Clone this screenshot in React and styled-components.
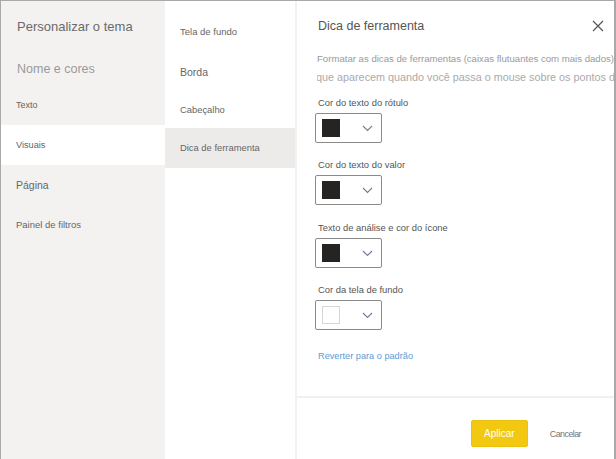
import React from "react";
import styled, { createGlobalStyle } from "styled-components";

const Global = createGlobalStyle`
  html, body { margin: 0; padding: 0; background: #fff; }
  body { font-family: "Liberation Sans", Arial, sans-serif; }
  * { box-sizing: border-box; }
`;

const Frame = styled.div`
  width: 616px;
  height: 459px;
  display: grid;
  grid-template-columns: 164px 130px 2px 1fr;
  border-top: 1px solid #a9a9a9;
  border-left: 1px solid #a9a9a9;
  border-right: 2px solid #a9a9a9;
  overflow: hidden;
`;

const LeftNav = styled.nav`
  background: #f3f2f1;
  display: flex;
  flex-direction: column;
  padding-top: 15px;
`;

const NavTitle = styled.div`
  font-size: 13px;
  color: #6a6a6a;
  padding-left: 16px;
  height: 22px;
  line-height: 22px;
  margin-bottom: 11px;
`;

const NavItem = styled.div`
  height: ${(p) => p.$h || 40}px;
  line-height: ${(p) => p.$h || 40}px;
  margin-bottom: ${(p) => p.$mb || 0}px;
  padding-left: ${(p) => p.$indent ?? 15}px;
  font-size: ${(p) => p.$size}px;
  color: ${(p) => p.$color || "#666"};
  background: ${(p) => (p.$active ? "#fff" : "transparent")};
  white-space: nowrap;
`;

const SubNav = styled.nav`
  background: #fff;
  display: flex;
  flex-direction: column;
  padding-top: 11px;
`;

const SubItem = styled.div`
  height: ${(p) => p.$h || 40}px;
  line-height: ${(p) => p.$h || 40}px;
  padding-left: 15px;
  font-size: ${(p) => p.$size}px;
  color: #666;
  background: ${(p) => (p.$active ? "#edebe9" : "transparent")};
  white-space: nowrap;
`;

const Divider = styled.div`
  background: #f3f2f1;
`;

const Pane = styled.section`
  display: flex;
  flex-direction: column;
  min-width: 0;
`;

const Content = styled.div`
  flex: 1;
  padding: 14px 0 0 20px;
  display: flex;
  flex-direction: column;
  min-width: 0;
`;

const Header = styled.div`
  display: flex;
  align-items: center;
  justify-content: space-between;
  height: 22px;
  padding-right: 10px;
`;

const Title = styled.h2`
  margin: 0;
  font-weight: normal;
  font-size: 12.5px;
  color: #555;
  padding-left: 1px;
`;

const Close = styled.button`
  border: 0;
  background: none;
  padding: 0;
  width: 12px;
  height: 12px;
  display: flex;
  cursor: pointer;
`;

const Desc = styled.p`
  margin: 12px 0 0 0;
  font-size: 9.6px;
  line-height: 19px;
  color: #9a9a9a;
  white-space: nowrap;
  overflow: hidden;
  span { display: block; }
  span:last-child { font-size: 10.8px; margin-left: -1px; color: #aaa; }
`;

const Field = styled.div`
  display: flex;
  flex-direction: column;
  margin-top: ${(p) => p.$mt}px;
`;

const Label = styled.label`
  font-size: 9.4px;
  color: #555;
  height: 14px;
  line-height: 14px;
  padding-left: 1px;
`;

const Picker = styled.button`
  margin-top: 3px;
  margin-left: -2px;
  width: 67px;
  height: 30px;
  border: 1px solid #8a8a8a;
  border-radius: 2px;
  background: #fff;
  display: flex;
  align-items: center;
  justify-content: space-between;
  padding: 0 8px 0 6px;
  cursor: pointer;
`;

const Swatch = styled.span`
  width: 18px;
  height: 18px;
  background: ${(p) => p.$color};
  border: 1px solid ${(p) => (p.$color === "#fff" ? "#d6d6d6" : "#252423")};
`;

const ResetLink = styled.a`
  margin-top: 21px;
  font-size: 9.2px;
  color: #5b9bd5;
  text-decoration: none;
  padding-left: 1px;
`;

const Footer = styled.footer`
  height: 63px;
  border-top: 2px solid #f0f0f0;
  display: flex;
  align-items: flex-start;
  justify-content: flex-end;
  padding: 22px 33px 0 0;
  gap: 22px;
`;

const Primary = styled.button`
  width: 57px;
  height: 27px;
  background: #f2c811;
  border: 1px solid #eac20f;
  border-radius: 2px;
  color: #fff;
  font-family: inherit;
  font-size: 10px;
  padding: 0;
`;

const Secondary = styled.button`
  border: 0;
  background: none;
  color: #777;
  font-family: inherit;
  font-size: 9px;
  letter-spacing: -0.6px;
  padding: 0;
  height: 27px;
`;

const Chevron = () => (
  <svg width="11" height="7" viewBox="0 0 11 7">
    <path d="M1 1l4.5 4.5L10 1" fill="none" stroke="#6f7c96" strokeWidth="1.1" />
  </svg>
);

const fields = [
  { label: "Cor do texto do rótulo", color: "#252423", mt: 9 },
  { label: "Cor do texto do valor", color: "#252423", mt: 15 },
  { label: "Texto de análise e cor do ícone", color: "#252423", mt: 16 },
  { label: "Cor da tela de fundo", color: "#fff", mt: 15 },
];

export default function App() {
  return (
    <>
      <Global />
      <Frame>
        <LeftNav>
          <NavTitle>Personalizar o tema</NavTitle>
          <NavItem $size={12.5} $color="#9a9a9a" $indent={16}>Nome e cores</NavItem>
          <NavItem $size={9} $h={32} $mb={4}>Texto</NavItem>
          <NavItem $size={9.2} $active>Visuais</NavItem>
          <NavItem $size={10.5}>Página</NavItem>
          <NavItem $size={9.5}>Painel de filtros</NavItem>
        </LeftNav>
        <SubNav>
          <SubItem $size={9.5}>Tela de fundo</SubItem>
          <SubItem $size={10.5}>Borda</SubItem>
          <SubItem $size={9.4} $h={36}>Cabeçalho</SubItem>
          <SubItem $size={9.4} $active>Dica de ferramenta</SubItem>
        </SubNav>
        <Divider />
        <Pane>
          <Content>
            <Header>
              <Title>Dica de ferramenta</Title>
              <Close aria-label="Fechar">
                <svg width="12" height="12" viewBox="0 0 12 12">
                  <path d="M1 1l10 10M11 1L1 11" stroke="#555" strokeWidth="1.2" />
                </svg>
              </Close>
            </Header>
            <Desc>
              <span>Formatar as dicas de ferramentas (caixas flutuantes com mais dados)</span>
              <span>que aparecem quando você passa o mouse sobre os pontos de dados</span>
            </Desc>
            {fields.map((f) => (
              <Field key={f.label} $mt={f.mt}>
                <Label>{f.label}</Label>
                <Picker>
                  <Swatch $color={f.color} />
                  <Chevron />
                </Picker>
              </Field>
            ))}
            <ResetLink href="#">Reverter para o padrão</ResetLink>
          </Content>
          <Footer>
            <Primary>Aplicar</Primary>
            <Secondary>Cancelar</Secondary>
          </Footer>
        </Pane>
      </Frame>
    </>
  );
}
